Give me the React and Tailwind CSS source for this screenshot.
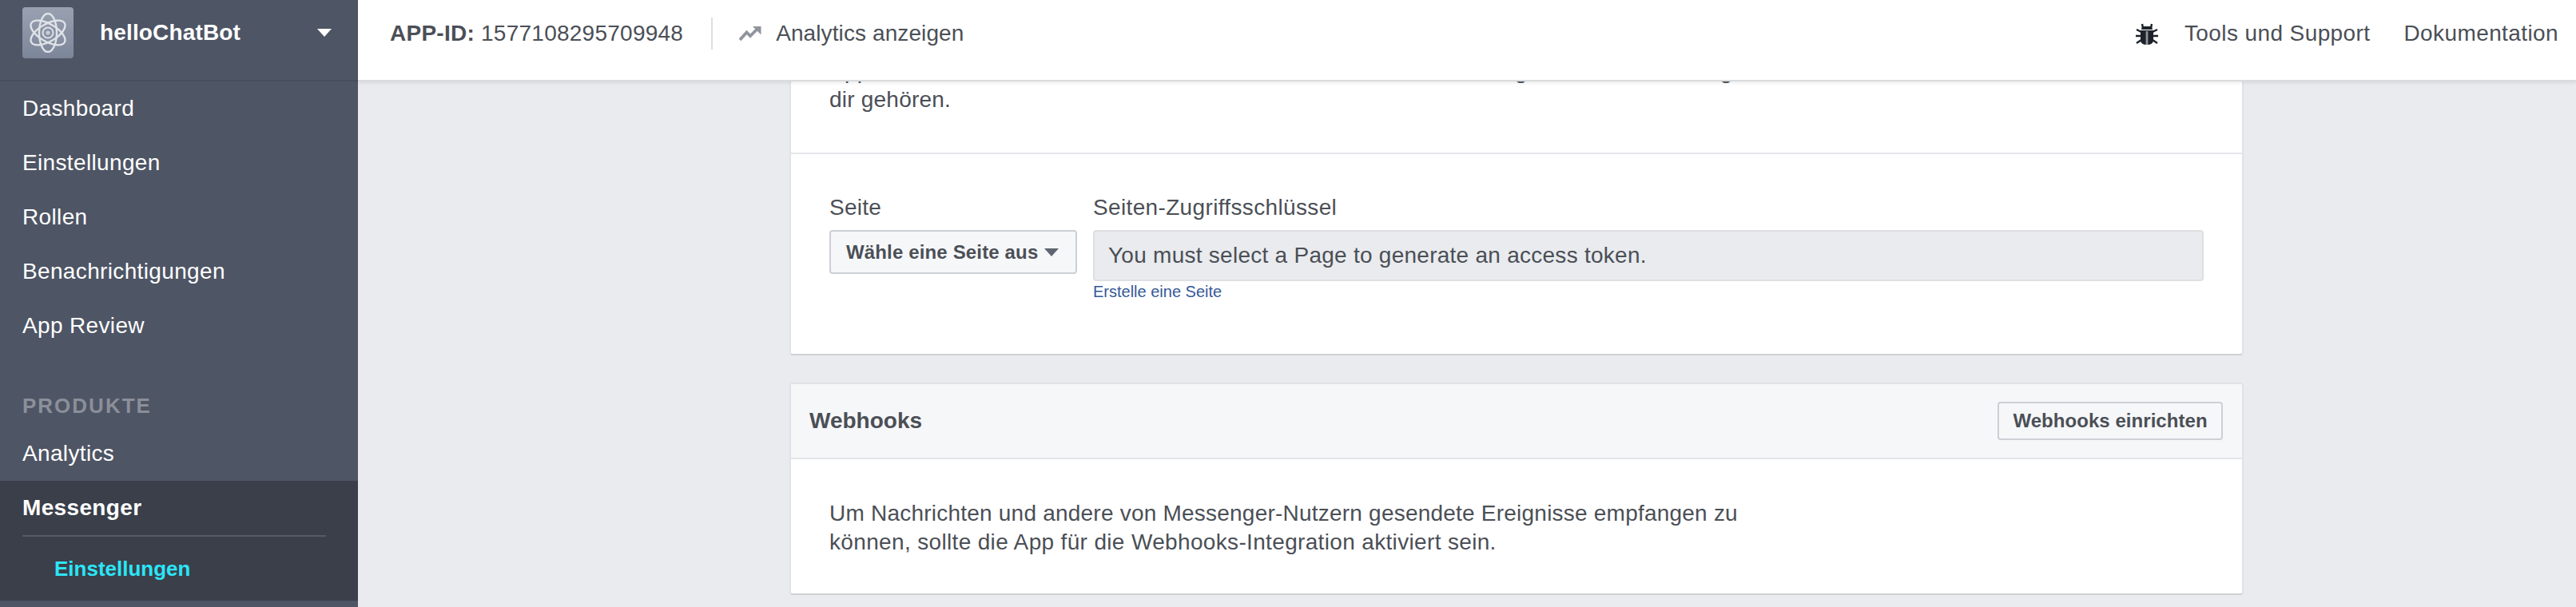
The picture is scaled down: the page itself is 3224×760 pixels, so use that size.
import React from 'react';

const navItems = ['Dashboard', 'Einstellungen', 'Rollen', 'Benachrichtigungen', 'App Review'];

const AtomLogo = () => (
  <div className="w-[64px] h-[64px] rounded-[4px] bg-gradient-to-b from-[#99a1b1] to-[#7c8699] flex items-center justify-center">
    <svg width="48" height="50" viewBox="0 0 48 50" fill="none" stroke="#dfe2e7" strokeWidth="2.4">
      <ellipse cx="24" cy="25" rx="24" ry="11" transform="rotate(30 24 25)" />
      <ellipse cx="24" cy="25" rx="24" ry="11" transform="rotate(-30 24 25)" />
      <ellipse cx="24" cy="25" rx="24" ry="11" transform="rotate(90 24 25)" />
      <circle cx="24" cy="25" r="6.5" strokeWidth="2" />
      <circle cx="24" cy="25" r="2.6" fill="#dfe2e7" stroke="none" opacity="0.75" />
    </svg>
  </div>
);

const TrendIcon = () => (
  <svg width="28" height="20" viewBox="0 0 28 20" className="mr-[18px]">
    <path d="M1 18 L9.5 8.5 L14 13 L22 5" fill="none" stroke="#90949c" strokeWidth="3.8" />
    <path d="M17 1 H27.5 V11.5 Z" fill="#90949c" />
  </svg>
);

const BugIcon = () => (
  <svg width="28" height="28" viewBox="0 0 28 28" className="mr-[33px]">
    <g stroke="#1d2129" strokeWidth="2.4" fill="none">
      <path d="M8 2 L9 7 M20 2 L19 7" />
      <path d="M1 9 L7 12 M27 9 L21 12" />
      <path d="M0 17 H6 M28 17 H22" />
      <path d="M1 26 L7 22 M27 26 L21 22" />
    </g>
    <path d="M8 5 H20 L21 9 H7 Z" fill="#1d2129" />
    <path d="M6 10 H22 V22 Q22 28 14 28 Q6 28 6 22 Z" fill="#1d2129" />
    <rect x="12.6" y="11" width="2.8" height="17" fill="#8f9296" />
  </svg>
);

const Caret = ({ className }) => (
  <svg width="18" height="10" viewBox="0 0 18 10" className={className}>
    <path d="M0 0 H18 L9 10 Z" fill="currentColor" />
  </svg>
);

const Sidebar = () => (
  <aside className="w-[448px] shrink-0 bg-[#4e5565] text-white flex flex-col">
    <div className="h-[102px] border-b-2 border-[#474e5c] flex items-center pl-[28px] pr-[33px] pb-[18px]">
      <AtomLogo />
      <span className="ml-[33px] text-[28px] font-bold flex-1 tracking-[0.15px]">helloChatBot</span>
      <Caret className="text-white" />
    </div>
    {navItems.map((item) => (
      <div key={item} className="h-[68px] flex items-center px-[28px] text-[28px] tracking-[0.35px]">{item}</div>
    ))}
    <div className="mt-[44px] mb-[4px] h-[44px] flex items-center px-[28px] text-[26px] font-bold tracking-[2px] text-[#8b8f99]">PRODUKTE</div>
    <div className="h-[68px] flex items-center px-[28px] text-[28px] tracking-[0.35px]">Analytics</div>
    <div className="bg-[#3a3f4a]">
      <div className="h-[70px] mx-[28px] mr-[40px] border-b-2 border-[#555a64] flex items-center text-[28px] font-bold tracking-[0.35px]">Messenger</div>
      <div className="h-[80px] pl-[68px] flex items-center text-[26px] font-bold text-[#2be6f8]">Einstellungen</div>
    </div>
  </aside>
);

const TopBar = () => (
  <header className="relative z-10 h-[102px] shrink-0 bg-white border-b-2 border-[#dadbdd] shadow-[0_2px_4px_rgba(0,0,0,0.08)] flex items-center pl-[40px] pr-[22px] pb-[16px] text-[28px] text-[#4b4f56] tracking-[0.25px]">
    <span><b>APP-ID:</b> 1577108295709948</span>
    <div className="w-[2px] h-[40px] bg-[#dddfe2] ml-[35px] mr-[33px]"></div>
    <TrendIcon />
    <span className="tracking-[0.1px]">Analytics anzeigen</span>
    <div className="flex-1"></div>
    <BugIcon />
    <span className="tracking-[0.4px]">Tools und Support</span>
    <span className="ml-[42px] tracking-[0.4px]">Dokumentation</span>
  </header>
);

const cardClass = 'bg-white border-2 border-[#e1e2e5] border-b-[#d0d1d5] rounded-[4px]';

export default function App() {
  return (
    <div className="flex h-[760px] w-[3224px] overflow-hidden bg-[#e9ebee] font-['Liberation_Sans',Arial,sans-serif]">
      <Sidebar />
      <main className="flex-1 min-w-0 flex flex-col">
        <TopBar />
        <div className="flex-1 overflow-hidden pl-[540px] pr-[416px] text-[28px] text-[#4b4f56] tracking-[0.22px]">
          <section className={`${cardClass} -mt-[60px]`}>
            <div className="px-[48px] pt-[27px] pb-[48px] border-b-2 border-[#e5e6e9] leading-[36px] whitespace-nowrap">
              Apps können mit diesem Schlüssel nur auf Nachrichten der Seite zugreifen. Nutze nur eigene Seiten, die
              <br />
              dir gehören.
            </div>
            <div className="pl-[48px] pr-[48px] pt-[49px] pb-[65px] flex gap-[20px]">
              <div className="w-[310px] shrink-0">
                <div className="leading-[36px] mb-[10px]">Seite</div>
                <button className="w-full h-[55px] bg-[#f6f7f9] border-2 border-[#ccd0d5] rounded-[4px] flex items-center pl-[19px] text-[24px] font-bold tracking-[0.15px]">
                  Wähle eine Seite aus
                  <Caret className="ml-[8px] text-[#5f6673]" />
                </button>
              </div>
              <div className="flex-1 min-w-0">
                <div className="leading-[36px] mb-[10px] tracking-[0.35px]">Seiten-Zugriffsschlüssel</div>
                <div className="h-[64px] bg-[#e9ebee] border-2 border-[#dddfe2] rounded-[4px] flex items-center pl-[17px] tracking-[0.26px]">
                  You must select a Page to generate an access token.
                </div>
                <a className="block text-[20px] leading-[26px] text-[#365899] tracking-normal">Erstelle eine Seite</a>
              </div>
            </div>
          </section>
          <section className={`${cardClass} mt-[34px] overflow-hidden`}>
            <div className="h-[94px] bg-[#f6f7f9] border-b-2 border-[#e5e6e9] flex items-center justify-between pl-[23px] pr-[24px]">
              <h2 className="font-bold text-[28px] tracking-normal">Webhooks</h2>
              <button className="w-[282px] h-[48px] bg-[#f6f7f9] border-2 border-[#ccd0d5] rounded-[4px] text-[24px] font-bold tracking-[0.05px]">Webhooks einrichten</button>
            </div>
            <p className="px-[48px] pt-[50px] pb-[46px] leading-[36px]">
              Um Nachrichten und andere von Messenger-Nutzern gesendete Ereignisse empfangen zu
              <br />
              <span className="tracking-[0.34px]">können, sollte die App für die Webhooks-Integration aktiviert sein.</span>
            </p>
          </section>
        </div>
      </main>
    </div>
  );
}
